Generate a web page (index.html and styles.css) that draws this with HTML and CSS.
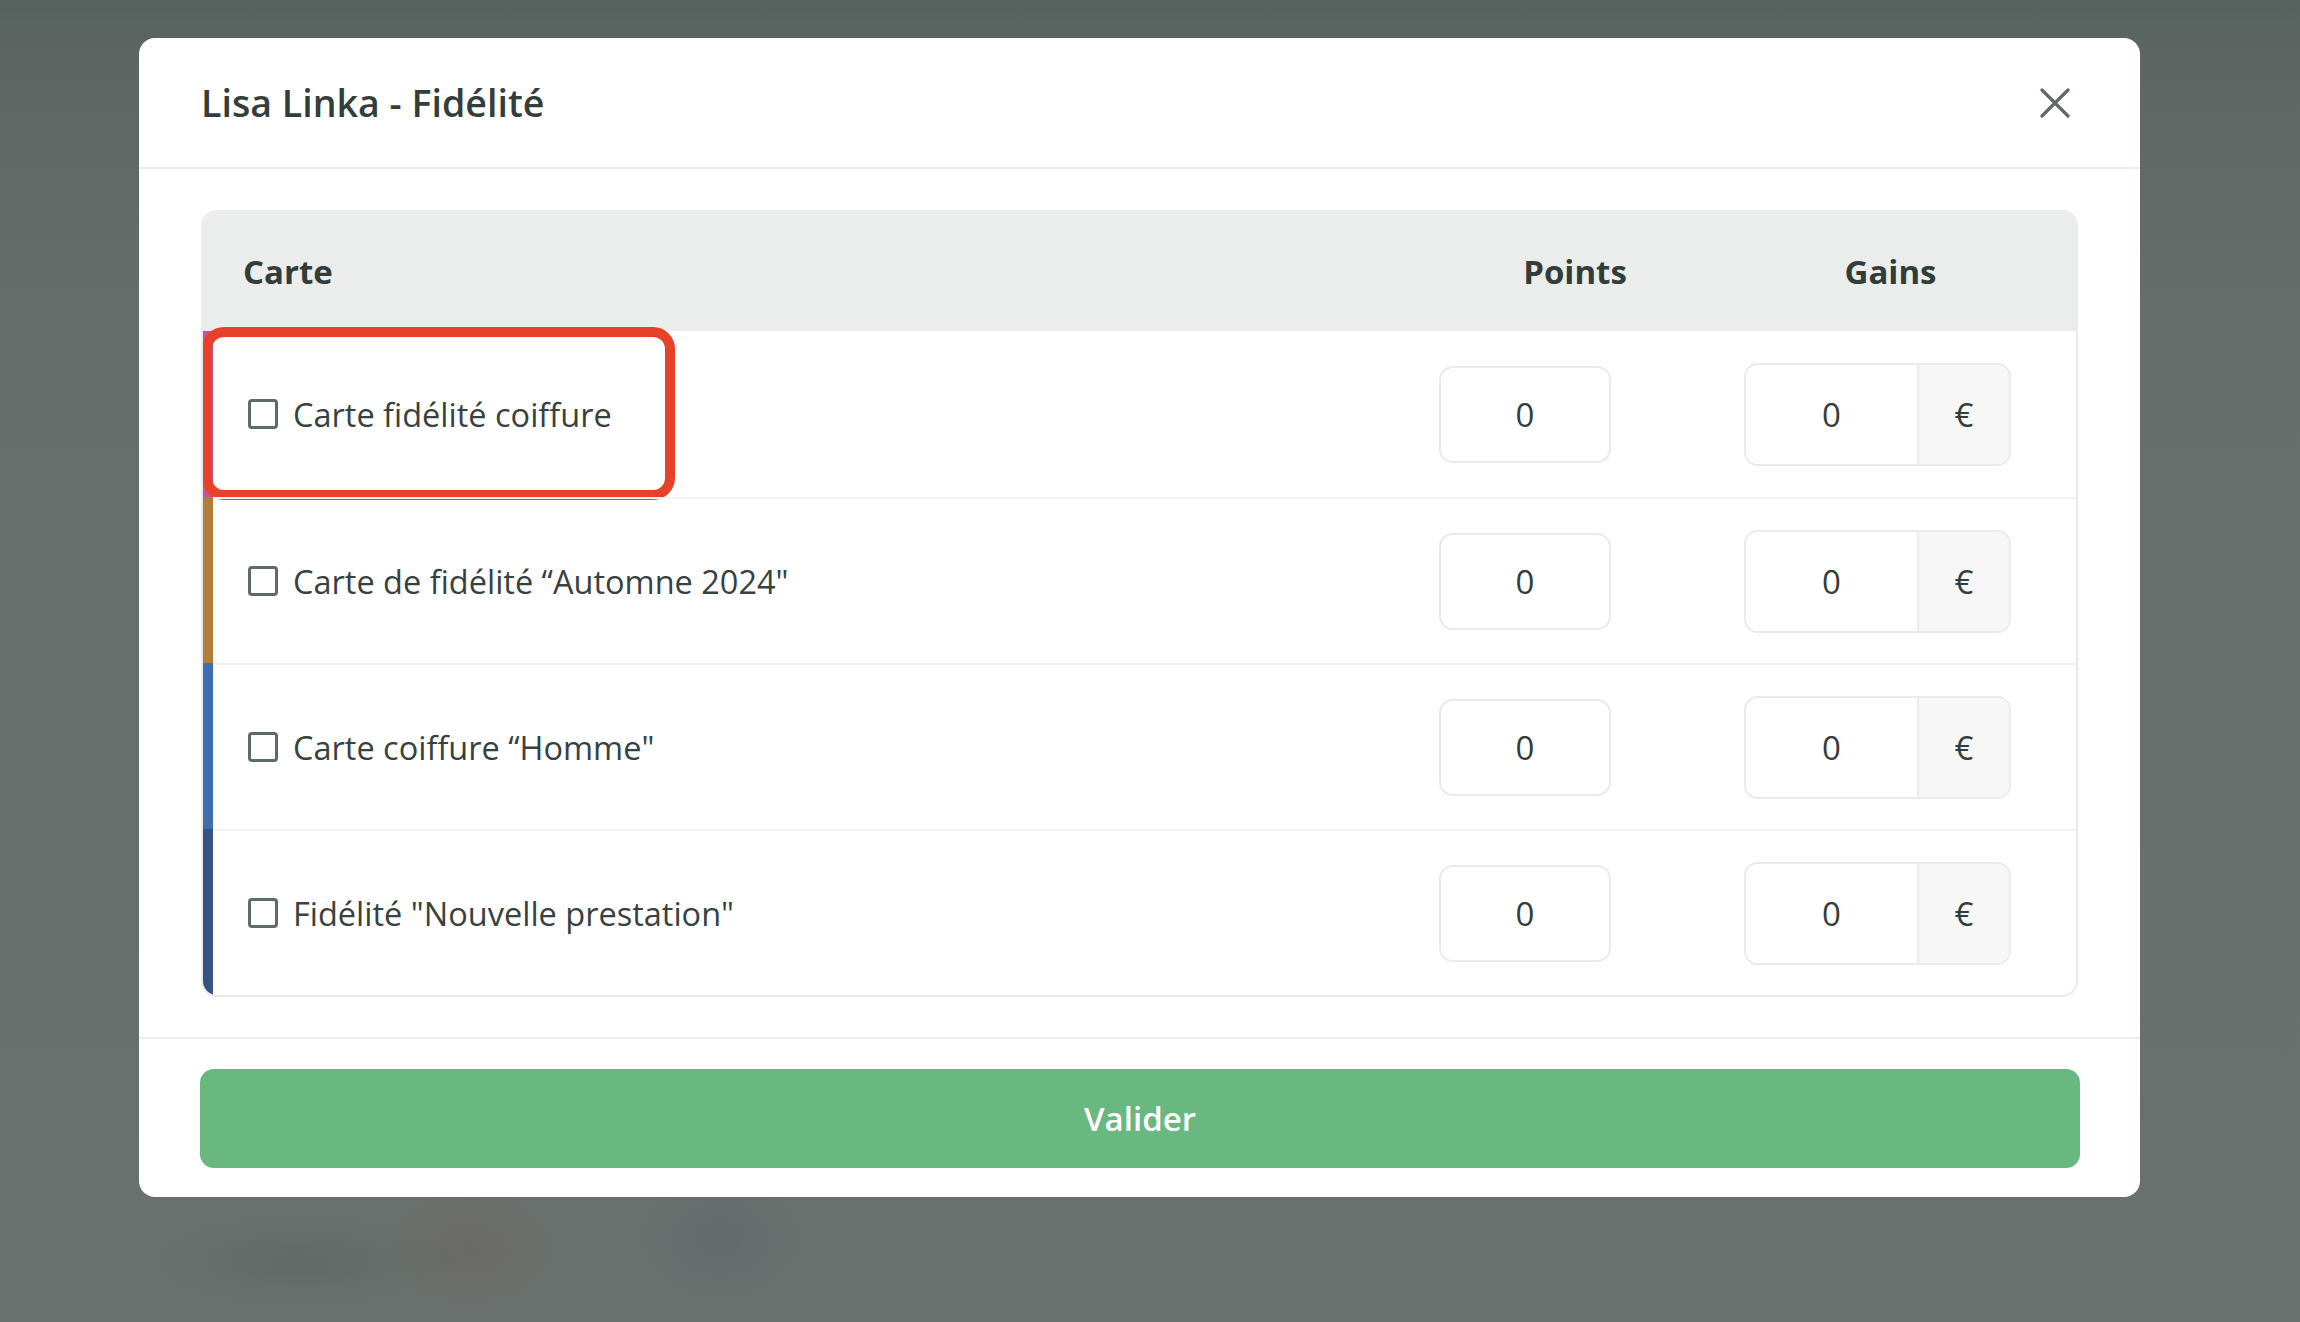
FILE: index.html
```html
<!DOCTYPE html>
<html lang="fr">
<head>
<meta charset="utf-8">
<title>Lisa Linka - Fidélité</title>
<link rel="stylesheet" href="styles.css">
</head>
<body>
<div class="backdrop">
  <div class="modal">
    <div class="modal-header">
      <h1 class="modal-title">Lisa Linka - Fidélité</h1>
      <button class="close" aria-label="Fermer">
        <svg width="30" height="30" viewBox="0 0 30 30"><path d="M2 2 L28 28 M28 2 L2 28" stroke="#5f6b67" stroke-width="3.2" stroke-linecap="round" fill="none"/></svg>
      </button>
    </div>
    <div class="modal-body">
      <div class="table">
        <div class="thead">
          <div class="th th-carte">Carte</div>
          <div class="th th-center">Points</div>
          <div class="th th-center th-gains">Gains</div>
        </div>

        <div class="row row-first">
          <div class="bar bar-pink"></div>
          <div class="cells">
            <label class="cell-label"><input type="checkbox" class="check"><span>Carte fidélité coiffure</span></label>
            <div class="cell-points"><div class="field">0</div></div>
            <div class="cell-gains"><div class="group"><div class="group-value">0</div><div class="group-addon">€</div></div></div>
          </div>
          <div class="highlight"></div>
        </div>

        <div class="row">
          <div class="bar bar-brown"></div>
          <div class="cells">
            <label class="cell-label"><input type="checkbox" class="check"><span>Carte de fidélité “Automne 2024"</span></label>
            <div class="cell-points"><div class="field">0</div></div>
            <div class="cell-gains"><div class="group"><div class="group-value">0</div><div class="group-addon">€</div></div></div>
          </div>
        </div>

        <div class="row">
          <div class="bar bar-blue"></div>
          <div class="cells">
            <label class="cell-label"><input type="checkbox" class="check"><span>Carte coiffure “Homme"</span></label>
            <div class="cell-points"><div class="field">0</div></div>
            <div class="cell-gains"><div class="group"><div class="group-value">0</div><div class="group-addon">€</div></div></div>
          </div>
        </div>

        <div class="row">
          <div class="bar bar-navy"></div>
          <div class="cells">
            <label class="cell-label"><input type="checkbox" class="check"><span>Fidélité "Nouvelle prestation"</span></label>
            <div class="cell-points"><div class="field">0</div></div>
            <div class="cell-gains"><div class="group"><div class="group-value">0</div><div class="group-addon">€</div></div></div>
          </div>
        </div>
      </div>
    </div>
    <div class="modal-footer">
      <button class="btn-validate">Valider</button>
    </div>
  </div>
</div>
</body>
</html>
```

FILE: styles.css
```css
* { box-sizing: border-box; }

html, body {
  margin: 0;
  padding: 0;
  width: 2300px;
  height: 1322px;
  overflow: hidden;
}

body {
  font-family: "Open Sans", "Noto Sans", sans-serif;
  color: #343e3b;
  background:
    radial-gradient(ellipse 90px 60px at 470px 1250px, rgba(110, 95, 95, 0.35), transparent),
    radial-gradient(ellipse 90px 70px at 720px 1240px, rgba(85, 100, 110, 0.35), transparent),
    radial-gradient(ellipse 160px 50px at 300px 1262px, rgba(80, 95, 90, 0.3), transparent),
    linear-gradient(180deg, #56615e 0px, #5d6663 60px, #666d6a 300px, #6a706d 100%);
}

.backdrop {
  padding: 38px 0 0 139px;
}

.modal {
  width: 2001px;
  background: #ffffff;
  border-radius: 16px;
  overflow: hidden;
}

.modal-header {
  height: 131px;
  padding: 0 70px 0 62px;
  display: flex;
  align-items: center;
  justify-content: space-between;
  border-bottom: 2px solid #ececec;
}

.modal-title {
  margin: 0;
  font-size: 37.6px;
  font-weight: 600;
  color: #333e3b;
  letter-spacing: 0;
}

.close {
  border: 0;
  background: none;
  padding: 0;
  width: 30px;
  height: 30px;
  display: flex;
  align-items: center;
  justify-content: center;
}

.modal-body {
  padding: 41px 62px 40px 62px;
}

.table {
  border: 2px solid #ebebeb;
  border-radius: 16px;
  overflow: hidden;
}

.thead {
  height: 119px;
  background: #ebedec;
  display: grid;
  grid-template-columns: 1fr 272px 365px;
  align-items: center;
}

.th {
  font-size: 33px;
  font-weight: 700;
  color: #323c39;
}

.th-carte { padding-left: 40px; }
.th-center { text-align: center; }
.th-gains { padding-right: 6px; }

.row {
  position: relative;
  height: 166px;
  display: flex;
}

.bar {
  width: 10px;
  flex: 0 0 10px;
}
.bar-pink { background: #c2549b; }
.bar-brown { background: #b07d3a; }
.bar-blue { background: #3e6db0; }
.bar-navy { background: #34547f; }

.cells {
  flex: 1;
  display: grid;
  grid-template-columns: 1fr 272px 365px;
  align-items: center;
  border-top: 2px solid #f2f2f2;
}

.row-first .cells { border-top: 0; }

.cell-label {
  display: flex;
  align-items: center;
  gap: 15px;
  padding-left: 35px;
  font-size: 32.5px;
  color: #37423f;
}

.check {
  appearance: none;
  -webkit-appearance: none;
  margin: 0;
  width: 30px;
  height: 30px;
  border: 3px solid #5f6b67;
  border-radius: 4px;
  background: #fff;
}

.cell-points {
  display: flex;
  justify-content: flex-start;
}

.field {
  width: 172px;
  height: 97px;
  border: 2px solid #ebebeb;
  border-radius: 14px;
  display: flex;
  align-items: center;
  justify-content: center;
  font-size: 33px;
  color: #333d3a;
}

.cell-gains {
  padding-left: 33px;
}

.group {
  width: 267px;
  height: 103px;
  border: 2px solid #ebebeb;
  border-radius: 14px;
  display: flex;
  overflow: hidden;
  font-size: 33px;
  color: #333d3a;
}

.group-value {
  width: 171px;
  display: flex;
  align-items: center;
  justify-content: center;
  background: #fff;
}

.group-addon {
  flex: 1;
  display: flex;
  align-items: center;
  justify-content: center;
  background: #f7f7f7;
  border-left: 2px solid #ebebeb;
}

.highlight {
  position: absolute;
  left: -1px;
  top: -4px;
  width: 473px;
  height: 173px;
  border: 10px solid #e8412a;
  border-radius: 22px;
  pointer-events: none;
}

.modal-footer {
  border-top: 2px solid #ececec;
  padding: 30px 60px 29px 61px;
}

.btn-validate {
  display: block;
  width: 100%;
  height: 99px;
  border: 0;
  border-radius: 14px;
  background: #69b87f;
  color: #ffffff;
  font-family: "Open Sans", "Noto Sans", sans-serif;
  font-size: 33px;
  font-weight: 600;
}
```
